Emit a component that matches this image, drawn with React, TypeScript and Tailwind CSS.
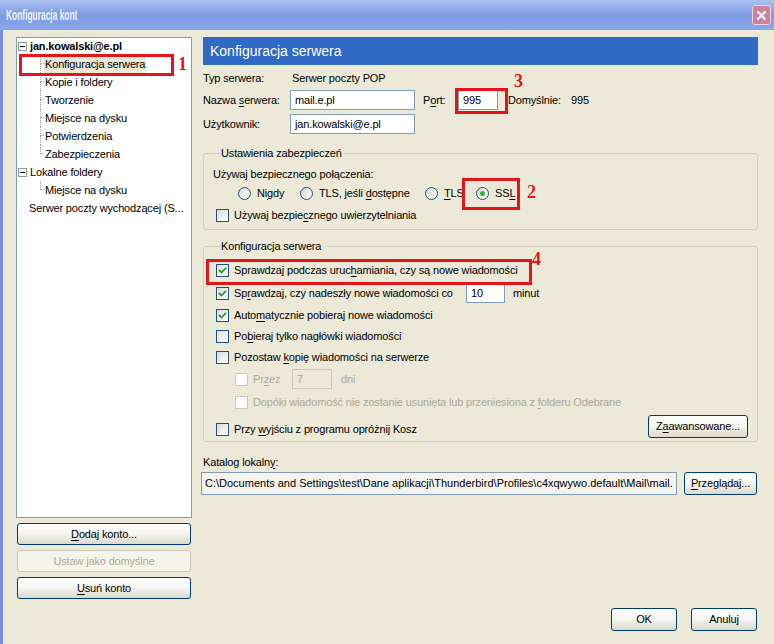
import type { ReactNode } from 'react';
import clsx from 'clsx';

function U({ children }: { children: ReactNode }) {
  return <span className="underline underline-offset-[2px]">{children}</span>;
}

function Check({ checked, disabled }: { checked?: boolean; disabled?: boolean }) {
  return (
    <span
      className={clsx(
        'w-[13px] h-[13px] shrink-0 border flex items-center justify-center',
        disabled ? 'border-[#cac8bb] bg-white' : 'border-[#1c5180] bg-linear-to-br from-[#dcdcd7] to-white'
      )}
    >
      {checked && (
        <svg width="9" height="9" viewBox="0 0 9 9">
          <path d="M1 4 L3.5 6.5 L8 1.8" stroke="#21a121" strokeWidth="1.8" fill="none" />
        </svg>
      )}
    </span>
  );
}

function Radio({ checked }: { checked?: boolean }) {
  return (
    <span className="w-[13px] h-[13px] shrink-0 rounded-full border border-[#1c5180] bg-linear-to-br from-[#dcdcd7] to-white flex items-center justify-center">
      {checked && <span className="w-[5px] h-[5px] rounded-full bg-[#2cb82c]" />}
    </span>
  );
}

function Input({ value, className, disabled }: { value: string; className?: string; disabled?: boolean }) {
  return (
    <div
      className={clsx(
        'h-[20px] border flex items-center pl-[4px] shrink-0',
        disabled ? 'border-[#c9c7ba] bg-[#ece9d8] text-[#aca899]' : 'border-[#7f9db9] bg-white',
        className
      )}
    >
      {value}
    </div>
  );
}

function Btn({ children, className, disabled }: { children: ReactNode; className?: string; disabled?: boolean }) {
  return (
    <div
      className={clsx(
        'rounded-[3px] border flex items-center justify-center shrink-0',
        disabled
          ? 'border-[#c9c7ba] text-[#aca899] bg-[#f5f4ea]'
          : 'border-[#003c74] bg-linear-to-b from-white via-[#f4f4f0] to-[#dcd9cc]',
        className
      )}
    >
      {children}
    </div>
  );
}

function Minus() {
  return (
    <span className="ml-px w-[9px] h-[9px] border border-[#919b9c] bg-white flex items-center justify-center">
      <span className="w-[5px] h-px bg-black" />
    </span>
  );
}

function Child({ label, last, selected }: { label: string; last?: boolean; selected?: boolean }) {
  return (
    <div className="h-[18px] flex pl-[23px]">
      <div className="w-[4px] h-full flex flex-col">
        <div className="h-[9px] border-l border-b border-dotted border-[#a0a0a0]" />
        {!last && <div className="flex-1 border-l border-dotted border-[#a0a0a0]" />}
      </div>
      <span className={clsx('h-[18px] flex items-center px-px', selected && 'bg-[#ece9d8]')}>{label}</span>
    </div>
  );
}

export default function App() {
  return (
    <div className="relative w-[774px] h-[644px] overflow-hidden bg-[#ece9d8] font-['Liberation_Sans',Arial,sans-serif] text-[11px] tracking-[-0.15px] text-black flex flex-col">
      {/* title bar */}
      <div className="h-[30px] shrink-0 flex items-center pl-[6px] bg-linear-to-b from-[#a9c1f1] via-[#7d9be2] to-[#8aa6e7]">
        <span className="inline-block origin-left scale-x-[0.6] text-[14px] font-bold tracking-normal text-[#eef2fc] whitespace-nowrap">
          Konfiguracja kont
        </span>
        <div className="ml-auto mr-[3px] w-[19px] h-[20px] rounded-[3px] border border-[#e6d6e6] bg-[#c9849b] flex items-center justify-center">
          <svg width="11" height="11" viewBox="0 0 11 11">
            <path d="M1.5 1.5 L9.5 9.5 M9.5 1.5 L1.5 9.5" stroke="white" strokeWidth="2" />
          </svg>
        </div>
      </div>

      <div className="flex-1 flex border-l-[3px] border-[#7b8ede]">
        {/* left column */}
        <div className="ml-[13px] mt-[7px] w-[176px] flex flex-col">
          <div className="h-[481px] border border-[#7f9db9] bg-white">
            <div className="-mt-px">
              <div className="h-[18px] flex items-center">
                <Minus />
                <span className="ml-[3px] font-bold">jan.kowalski@e.pl</span>
              </div>
              <Child label="Konfiguracja serwera" selected />
              <Child label="Kopie i foldery" />
              <Child label="Tworzenie" />
              <Child label="Miejsce na dysku" />
              <Child label="Potwierdzenia" />
              <Child label="Zabezpieczenia" last />
              <div className="h-[18px] flex items-center">
                <Minus />
                <span className="ml-[3px]">Lokalne foldery</span>
              </div>
              <Child label="Miejsce na dysku" last />
              <div className="h-[18px] flex items-center pl-[12px] whitespace-nowrap">Serwer poczty wychodzącej (S...</div>
            </div>
          </div>
          <Btn className="mt-[5px] mx-px h-[22px]">
            <U>D</U>odaj konto...
          </Btn>
          <Btn className="mt-[5px] mx-px h-[22px]" disabled>
            Ustaw jako domyślne
          </Btn>
          <Btn className="mt-[5px] mx-px h-[22px]">
            <U>U</U>suń konto
          </Btn>
        </div>

        {/* right column */}
        <div className="ml-[11px] mt-[7px] w-[555px] flex flex-col">
          <div className="h-[28px] bg-[#316ac5] text-white text-[14px] tracking-normal flex items-center pl-[7px]">Konfiguracja serwera</div>

          <div className="mt-[6px] h-[14px] flex items-center">
            <span className="w-[89px]">Typ serwera:</span>
            <span>Serwer poczty POP</span>
          </div>
          <div className="mt-[5px] h-[20px] flex items-center">
            <span className="w-[87px]">
              Nazwa <U>s</U>erwera:
            </span>
            <Input value="mail.e.pl" className="w-[125px]" />
            <span className="ml-[8px] w-[35px]">
              P<U>o</U>rt:
            </span>
            <Input value="995" className="w-[40px]" />
            <span className="ml-[10px] w-[63px]">Domyślnie:</span>
            <span>995</span>
          </div>
          <div className="mt-[4px] h-[20px] flex items-center">
            <span className="w-[87px]">Użytkownik:</span>
            <Input value="jan.kowalski@e.pl" className="w-[125px]" />
          </div>

          <fieldset className="mt-[13px] border border-[#d0d0bf] rounded-[3px] pl-[9px] pb-[7px]">
            <legend className="ml-[6px] px-[2px] leading-[13px]">Ustawienia zabezpieczeń</legend>
            <div className="mt-[7px] h-[14px] flex items-center">Używaj bezpiecznego połączenia:</div>
            <div className="mt-[5px] h-[14px] flex items-center pl-[25px]">
              <div className="w-[62px] flex items-center">
                <Radio />
                <span className="ml-[6px]">
                  Ni<U>g</U>dy
                </span>
              </div>
              <div className="w-[125px] flex items-center">
                <Radio />
                <span className="ml-[6px]">
                  TLS, jeśli <U>d</U>ostępne
                </span>
              </div>
              <div className="w-[51px] flex items-center">
                <Radio />
                <span className="ml-[6px]">
                  <U>T</U>LS
                </span>
              </div>
              <div className="flex items-center">
                <Radio checked />
                <span className="ml-[6px]">
                  SS<U>L</U>
                </span>
              </div>
            </div>
            <div className="mt-[8px] h-[14px] flex items-center ml-[3px]">
              <Check />
              <span className="ml-[5px]">
                Używaj bezpie<U>c</U>znego uwierzytelniania
              </span>
            </div>
          </fieldset>

          <fieldset className="mt-[10px] border border-[#d0d0bf] rounded-[3px] pl-[12px] pr-[9px] pb-[3px]">
            <legend className="ml-[6px] px-[2px] leading-[13px] -translate-x-[3px]">Konfiguracja serwera</legend>
            <div className="mt-[10px] h-[14px] flex items-center">
              <Check checked />
              <span className="ml-[5px]">
                Sprawdzaj podczas uruc<U>h</U>amiania, czy są nowe wiadomości
              </span>
            </div>
            <div className="mt-[6px] h-[20px] flex items-center">
              <Check checked />
              <span className="ml-[5px] w-[232px]">
                Sp<U>r</U>awdzaj, czy nadeszły nowe wiadomości co
              </span>
              <Input value="10" className="w-[39px]" />
              <span className="ml-[8px]">minut</span>
            </div>
            <div className="mt-[5px] h-[14px] flex items-center">
              <Check checked />
              <span className="ml-[5px]">
                Auto<U>m</U>atycznie pobieraj nowe wiadomości
              </span>
            </div>
            <div className="mt-[7px] h-[14px] flex items-center">
              <Check />
              <span className="ml-[5px]">
                Po<U>b</U>ieraj tylko nagłówki wiadomości
              </span>
            </div>
            <div className="mt-[7px] h-[14px] flex items-center">
              <Check />
              <span className="ml-[5px]">
                Pozostaw <U>k</U>opię wiadomości na serwerze
              </span>
            </div>
            <div className="mt-[5px] h-[20px] flex items-center pl-[19px] text-[#aca899]">
              <Check disabled />
              <span className="ml-[5px] w-[39px]">
                Pr<U>z</U>ez
              </span>
              <Input value="7" className="w-[40px]" disabled />
              <span className="ml-[9px]">dni</span>
            </div>
            <div className="mt-[6px] h-[14px] flex items-center pl-[19px] text-[#aca899]">
              <Check disabled />
              <span className="ml-[5px]">
                Dopóki wiadomość nie zostanie usunięta lub przeniesiona z <U>f</U>olderu Odebrane
              </span>
            </div>
            <div className="mt-[6px] h-[23px] flex items-center">
              <div className="mt-[5px] flex items-center">
                <Check />
                <span className="ml-[5px]">
                  Przy <U>w</U>yjściu z programu opróżnij Kosz
                </span>
              </div>
              <Btn className="ml-auto w-[100px] h-[23px]">
                Z<U>a</U>awansowane...
              </Btn>
            </div>
          </fieldset>

          <div className="mt-[13px] h-[14px] flex items-center">
            Katalog lokaln<U>y</U>:
          </div>
          <div className="mt-[3px] h-[23px] flex items-center">
            <div className="-ml-[2px] w-[476px] h-[23px] border border-[#7f9db9] bg-[#f4f3ee] flex items-center pl-[3px] overflow-hidden whitespace-nowrap tracking-normal">
              {'C:\\Documents and Settings\\test\\Dane aplikacji\\Thunderbird\\Profiles\\c4xqwywo.default\\Mail\\mail.'}
            </div>
            <Btn className="ml-[7px] w-[73px] h-[23px]">
              <U>P</U>rzeglądaj...
            </Btn>
          </div>

          <div className="mt-[113px] flex justify-end pr-px">
            <Btn className="w-[66px] h-[23px]">OK</Btn>
            <Btn className="ml-[14px] w-[66px] h-[23px]">Anuluj</Btn>
          </div>
        </div>
      </div>

      {/* red annotations */}
      <div className="absolute left-[19px] top-[54px] w-[155px] h-[22px] border-[3px] border-[#e3151b]" />
      <div className="absolute left-[178px] top-[55px] text-[18px] font-bold leading-none text-[#e3151b] font-['Liberation_Serif',serif]">1</div>
      <div className="absolute left-[462px] top-[178px] w-[58px] h-[32px] border-[3px] border-[#e3151b]" />
      <div className="absolute left-[527px] top-[183px] text-[18px] font-bold leading-none text-[#e3151b] font-['Liberation_Serif',serif]">2</div>
      <div className="absolute left-[455px] top-[88px] w-[53px] h-[26px] border-[3px] border-[#e3151b]" />
      <div className="absolute left-[514px] top-[72px] text-[18px] font-bold leading-none text-[#e3151b] font-['Liberation_Serif',serif]">3</div>
      <div className="absolute left-[206px] top-[259px] w-[326px] h-[26px] border-[3px] border-[#e3151b]" />
      <div className="absolute left-[532px] top-[250px] text-[18px] font-bold leading-none text-[#e3151b] font-['Liberation_Serif',serif]">4</div>
    </div>
  );
}
